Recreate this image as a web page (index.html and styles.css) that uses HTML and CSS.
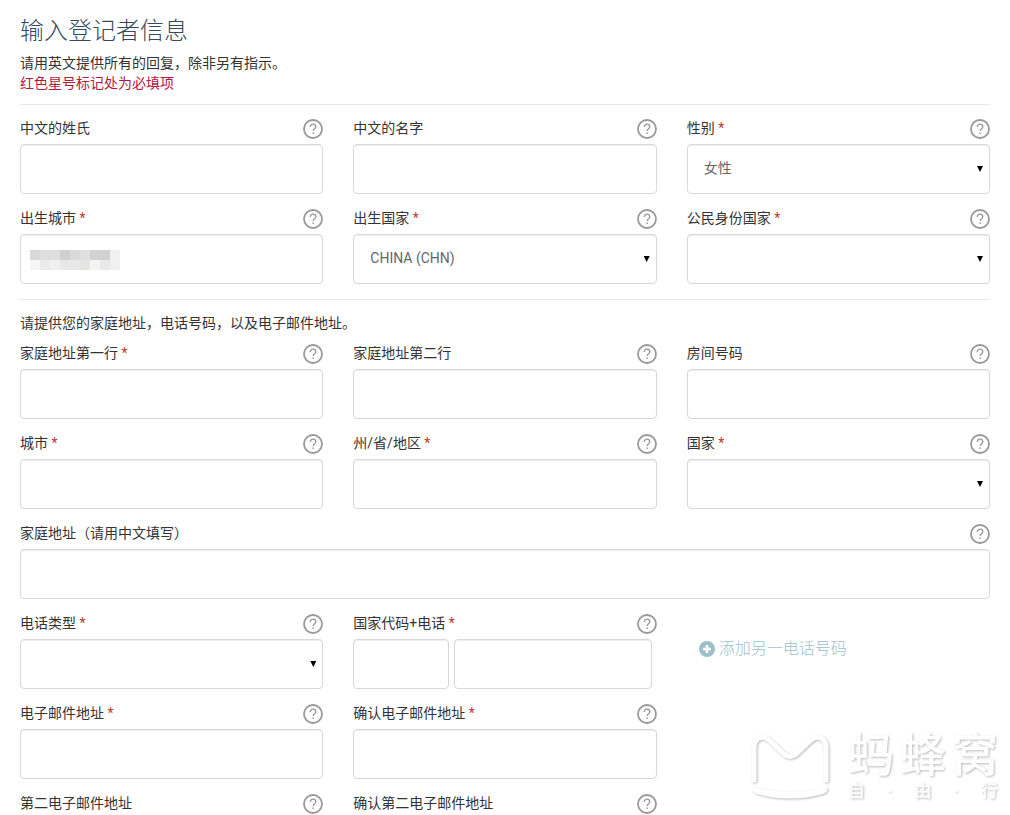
FILE: index.html
```html
<!DOCTYPE html>
<html lang="zh-CN">
<head>
<meta charset="utf-8">
<meta name="viewport" content="width=device-width, initial-scale=1">
<title>输入登记者信息</title>
<link rel="stylesheet" href="styles.css">
</head>
<body>
<svg width="0" height="0" class="defs" aria-hidden="true">
  <symbol id="help" viewBox="0 0 20 20">
    <circle cx="10" cy="10" r="9" fill="none" stroke="#999" stroke-width="1.8"/>
    <path d="M7.2 8.1c0-1.9 1.2-2.9 2.8-2.9s2.8 1 2.8 2.5c0 2-2.6 2.1-2.6 4.3" fill="none" stroke="#999" stroke-width="1.3"/>
    <rect x="9.4" y="13.4" width="1.5" height="1.5" fill="#999"/>
  </symbol>
</svg>
<main class="page">
  <h1 class="title">输入登记者信息</h1>
  <p class="text">请用英文提供所有的回复，除非另有指示。</p>
  <p class="text required-note">红色星号标记处为必填项</p>
  <form>
    <div class="grid section">
      <div class="field">
        <div class="head"><label for="surname">中文的姓氏</label><button type="button" class="help" aria-label="帮助"><svg><use href="#help"/></svg></button></div>
        <input class="control" id="surname" type="text">
      </div>
      <div class="field">
        <div class="head"><label for="given">中文的名字</label><button type="button" class="help" aria-label="帮助"><svg><use href="#help"/></svg></button></div>
        <input class="control" id="given" type="text">
      </div>
      <div class="field">
        <div class="head"><label for="gender">性别 <span class="star">*</span></label><button type="button" class="help" aria-label="帮助"><svg><use href="#help"/></svg></button></div>
        <div class="select"><select class="control" id="gender"><option>女性</option></select></div>
      </div>
      <div class="field">
        <div class="head"><label for="birth-city">出生城市 <span class="star">*</span></label><button type="button" class="help" aria-label="帮助"><svg><use href="#help"/></svg></button></div>
        <div class="masked">
          <input class="control" id="birth-city" type="text">
          <svg class="mosaic" viewBox="0 0 9 2" shape-rendering="crispEdges" aria-hidden="true">
            <rect width="9" height="2" fill="#f0f0f0"/>
            <path d="M0 0h1v1H0z" fill="#d9d9d9"/><path d="M1 0h2v1H1z" fill="#dedede"/><path d="M3 0h1v1H3z" fill="#d0d0d0"/><path d="M4 0h1v1H4z" fill="#dadada"/><path d="M5 0h1v1H5z" fill="#e0e0e0"/><path d="M6 0h2v1H6z" fill="#d2d2d2"/>
            <path d="M0 1h1v1H0z" fill="#f6f6f6"/><path d="M1 1h1v1H1z" fill="#ebebeb"/><path d="M3 1h2v1H3z" fill="#e8e8e8"/><path d="M5 1h1v1H5z" fill="#e5e5e2"/><path d="M6 1h1v1H6z" fill="#f4f4f4"/><path d="M7 1h1v1H7z" fill="#e9e9e9"/>
          </svg>
        </div>
      </div>
      <div class="field">
        <div class="head"><label for="birth-country">出生国家 <span class="star">*</span></label><button type="button" class="help" aria-label="帮助"><svg><use href="#help"/></svg></button></div>
        <div class="select"><select class="control" id="birth-country"><option>CHINA (CHN)</option></select></div>
      </div>
      <div class="field">
        <div class="head"><label for="citizenship">公民身份国家 <span class="star">*</span></label><button type="button" class="help" aria-label="帮助"><svg><use href="#help"/></svg></button></div>
        <div class="select"><select class="control" id="citizenship"><option></option></select></div>
      </div>
    </div>

    <div class="section contact">
      <p class="text">请提供您的家庭地址，电话号码，以及电子邮件地址。</p>
      <div class="grid">
        <div class="field">
          <div class="head"><label for="address1">家庭地址第一行 <span class="star">*</span></label><button type="button" class="help" aria-label="帮助"><svg><use href="#help"/></svg></button></div>
          <input class="control" id="address1" type="text">
        </div>
        <div class="field">
          <div class="head"><label for="address2">家庭地址第二行</label><button type="button" class="help" aria-label="帮助"><svg><use href="#help"/></svg></button></div>
          <input class="control" id="address2" type="text">
        </div>
        <div class="field">
          <div class="head"><label for="room">房间号码</label><button type="button" class="help" aria-label="帮助"><svg><use href="#help"/></svg></button></div>
          <input class="control" id="room" type="text">
        </div>
        <div class="field">
          <div class="head"><label for="city">城市 <span class="star">*</span></label><button type="button" class="help" aria-label="帮助"><svg><use href="#help"/></svg></button></div>
          <input class="control" id="city" type="text">
        </div>
        <div class="field">
          <div class="head"><label for="state">州/省/地区 <span class="star">*</span></label><button type="button" class="help" aria-label="帮助"><svg><use href="#help"/></svg></button></div>
          <input class="control" id="state" type="text">
        </div>
        <div class="field">
          <div class="head"><label for="country">国家 <span class="star">*</span></label><button type="button" class="help" aria-label="帮助"><svg><use href="#help"/></svg></button></div>
          <div class="select"><select class="control" id="country"><option></option></select></div>
        </div>
        <div class="field wide">
          <div class="head"><label for="address-cn">家庭地址（请用中文填写）</label><button type="button" class="help" aria-label="帮助"><svg><use href="#help"/></svg></button></div>
          <input class="control" id="address-cn" type="text">
        </div>
        <div class="field">
          <div class="head"><label for="phone-type">电话类型 <span class="star">*</span></label><button type="button" class="help" aria-label="帮助"><svg><use href="#help"/></svg></button></div>
          <div class="select"><select class="control" id="phone-type"><option></option></select></div>
        </div>
        <div class="field">
          <div class="head"><label for="phone-code">国家代码+电话 <span class="star">*</span></label><button type="button" class="help" aria-label="帮助"><svg><use href="#help"/></svg></button></div>
          <div class="phone">
            <input class="control" id="phone-code" type="text">
            <input class="control" type="tel" aria-label="电话">
          </div>
        </div>
        <div class="field add">
          <a class="add-link" href="#">
            <svg class="plus" viewBox="0 0 16 16" aria-hidden="true"><circle cx="8" cy="8" r="8" fill="#9dbfcb"/><path d="M8 4v8M4 8h8" stroke="#fff" stroke-width="2.6"/></svg>
            <span>添加另一电话号码</span>
          </a>
        </div>
        <div class="field">
          <div class="head"><label for="email">电子邮件地址 <span class="star">*</span></label><button type="button" class="help" aria-label="帮助"><svg><use href="#help"/></svg></button></div>
          <input class="control" id="email" type="email">
        </div>
        <div class="field">
          <div class="head"><label for="email-confirm">确认电子邮件地址 <span class="star">*</span></label><button type="button" class="help" aria-label="帮助"><svg><use href="#help"/></svg></button></div>
          <input class="control" id="email-confirm" type="email">
        </div>
        <div class="field first-column">
          <div class="head"><label for="email2">第二电子邮件地址</label><button type="button" class="help" aria-label="帮助"><svg><use href="#help"/></svg></button></div>
          <input class="control" id="email2" type="email">
        </div>
        <div class="field">
          <div class="head"><label for="email2-confirm">确认第二电子邮件地址</label><button type="button" class="help" aria-label="帮助"><svg><use href="#help"/></svg></button></div>
          <input class="control" id="email2-confirm" type="email">
        </div>
      </div>
    </div>
  </form>
</main>
<div class="watermark">
  <svg class="watermark-logo" viewBox="0 0 80 72" aria-hidden="true">
    <path d="M4 50V18C4 8 12 4 19 10L34 24Q40 29 46 24L61 10C68 4 76 8 76 18V50" fill="none" stroke="#fff" stroke-width="5" stroke-linecap="round"/>
    <path d="M3 57Q40 66 77 57Q79 62 73 64Q40 73 7 64Q1 62 3 57Z" fill="#fff"/>
  </svg>
  <div class="watermark-words">
    <div class="watermark-name"><span>蚂</span><span>蜂</span><span>窝</span></div>
    <div class="watermark-sub"><span>自</span><span>·</span><span>由</span><span>·</span><span>行</span></div>
  </div>
</div>
</body>
</html>
```

FILE: styles.css
```css
* { box-sizing: border-box; }

body {
  margin: 0;
  height: 100vh;
  overflow: hidden;
  position: relative;
  background: #fff;
  color: #333;
  font: 14px/20px Roboto, "Noto Sans CJK SC", sans-serif;
}

.defs { position: absolute; }

.page { padding: 15px 20px 0; }

.title {
  margin: 0 0 6px;
  color: #34495e;
  font-size: 24px;
  font-weight: 300;
  line-height: 32px;
}

.text { margin: 0; }
.required-note { color: #b5183d; }

.section {
  margin-top: 11px;
  padding-top: 14px;
  border-top: 1px solid #e9e9e9;
}

.contact {
  margin-top: 15px;
  padding-top: 13px;
}
.contact .grid { margin-top: 11px; }

.grid {
  display: grid;
  grid-template-columns: repeat(3, minmax(0, 1fr));
  gap: 15px 30px;
}
.wide { grid-column: 1 / -1; }
.first-column { grid-column-start: 1; }

.head {
  display: flex;
  justify-content: space-between;
  height: 25px;
  line-height: 18px;
}

.star { color: #c0392b; }

.help {
  width: 20px;
  height: 20px;
  padding: 0;
  border: 0;
  background: none;
}
.help svg {
  display: block;
  width: 20px;
  height: 20px;
}

.control {
  display: block;
  width: 100%;
  height: 50px;
  padding: 0 16px;
  border: 1px solid #d8d8d8;
  border-radius: 4px;
  background: #fff;
  box-shadow: inset 0 1px 1px #eee;
  color: #666;
  font: inherit;
  appearance: none;
}
select.control { padding: 0 16px 2px; }

.select, .masked { position: relative; }
.select::after {
  content: "";
  position: absolute;
  top: 22px;
  right: 7px;
  width: 6px;
  height: 6px;
  background: #000;
  clip-path: polygon(0 0, 100% 0, 50% 100%);
  pointer-events: none;
}

.mosaic {
  position: absolute;
  top: 16px;
  left: 10px;
  width: 90px;
  height: 20px;
}

.phone {
  display: grid;
  grid-template-columns: 96fr 197fr;
  gap: 5px;
  padding-right: 5px;
}

.add { padding: 25px 12px 0; }
.add-link {
  display: flex;
  align-items: center;
  gap: 4px;
  color: #9dbfcb;
  font-size: 16px;
  font-weight: 300;
  text-decoration: none;
}
.plus {
  width: 16px;
  height: 16px;
}

.watermark {
  position: absolute;
  right: 12px;
  bottom: 13px;
  display: flex;
  align-items: center;
  gap: 18px;
  color: #fff;
  filter: drop-shadow(1px 1px 1px #bbb);
  pointer-events: none;
}
.watermark-logo {
  width: 80px;
  height: 72px;
}
.watermark-name, .watermark-sub {
  display: flex;
  justify-content: space-between;
}
.watermark-words { width: 150px; }
.watermark-name {
  font-size: 46px;
  font-weight: 500;
  line-height: 50px;
}
.watermark-sub {
  font-size: 17px;
  font-weight: 500;
  line-height: 22px;
}
```
